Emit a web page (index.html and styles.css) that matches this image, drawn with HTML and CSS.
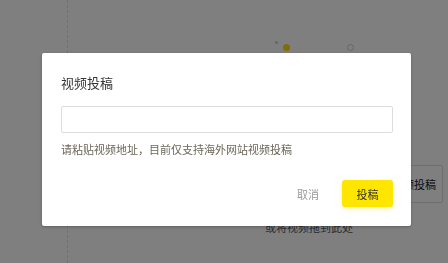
FILE: index.html
```html
<!DOCTYPE html>
<html lang="zh-CN">
<head>
    <meta charset="UTF-8">
    <meta content="width=device-width, initial-scale=1.0" name="viewport">
    <title>视频投稿</title>
    <link rel="stylesheet" href="styles.css">
</head>
<body>
<div class="page">
    <div class="steps">
        <span class="dot-small"></span>
        <span class="dot-active"></span>
        <span class="dot-empty"></span>
    </div>
    <div class="upload-row">
        <button class="upload-btn">视频投稿</button>
    </div>
    <p class="drop-tip">或将视频拖到此处</p>
</div>

<div class="overlay">
    <div class="dialog">
        <h2 class="dialog-title">视频投稿</h2>
        <input class="url-input" type="text">
        <p class="hint">请粘贴视频地址，目前仅支持海外网站视频投稿</p>
        <div class="dialog-footer">
            <button class="btn-cancel">取消</button>
            <button class="btn-submit">投稿</button>
        </div>
    </div>
</div>
</body>
</html>
```

FILE: styles.css
```css
body {
    margin: 0;
    width: 448px;
    height: 263px;
    overflow: hidden;
    background: #fff;
    font-family: "Noto Sans CJK SC", "Noto Sans", sans-serif;
    color: #333;
}

/* page behind the dialog */
.page {
    margin-left: 67px;
    height: 263px;
    border-left: 1px dashed #e2e2e2;
}

.steps {
    display: flex;
    align-items: center;
    padding: 42px 0 0 207px;
    height: 10px;
}

.dot-small {
    width: 3px;
    height: 3px;
    border-radius: 50%;
    background: #ccc;
    margin-top: -9px;
}

.dot-active {
    width: 7px;
    height: 7px;
    border-radius: 50%;
    background: #ffdf00;
    margin-left: 5px;
}

.dot-empty {
    width: 5px;
    height: 5px;
    border-radius: 50%;
    border: 1px solid #ccc;
    margin-left: 57px;
}

.upload-row {
    display: flex;
    justify-content: flex-end;
    margin-top: 113px;
    padding-right: 5px;
}

.upload-btn {
    width: 70px;
    height: 38px;
    padding: 0 6px 0 0;
    text-align: right;
    border: 1px solid #ddd;
    border-radius: 2px;
    background: #fff;
    font-family: inherit;
    font-size: 11px;
    color: #222;
}

.drop-tip {
    margin: 16px 0 0 197px;
    font-size: 11px;
    color: #555;
}

/* dialog */
.overlay {
    position: fixed;
    inset: 0;
    background: rgba(0, 0, 0, 0.5);
}

.dialog {
    box-sizing: border-box;
    width: 369px;
    margin: 53px 0 0 42px;
    padding: 21px 18px 19px 19px;
    background: #fff;
    border-radius: 2px;
    box-shadow: 0 1px 3px rgba(0, 0, 0, 0.25);
}

.dialog-title {
    margin: 0;
    font-size: 13px;
    line-height: 18px;
    font-weight: normal;
    color: #333;
}

.url-input {
    display: block;
    box-sizing: border-box;
    width: 332px;
    height: 27px;
    margin-top: 14px;
    border: 1px solid #ddd;
    border-radius: 2px;
    outline: none;
}

.hint {
    margin: 8px 0 0;
    font-size: 11px;
    line-height: 16px;
    color: #6b6659;
}

.dialog-footer {
    display: flex;
    justify-content: flex-end;
    align-items: center;
    margin-top: 23px;
}

.btn-cancel {
    padding: 0 12px;
    height: 27px;
    border: none;
    background: none;
    font-family: inherit;
    font-size: 11px;
    color: #999;
}

.btn-submit {
    width: 51px;
    height: 27px;
    margin-left: 11px;
    border: none;
    border-radius: 3px;
    background: #ffe600;
    box-shadow: 0 2px 4px rgba(255, 220, 0, 0.3);
    font-family: inherit;
    font-size: 11px;
    color: #333;
}
```
